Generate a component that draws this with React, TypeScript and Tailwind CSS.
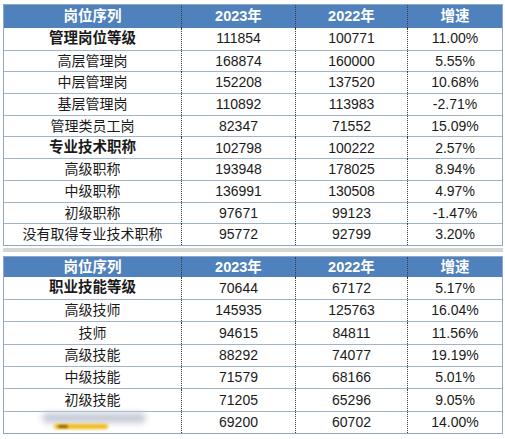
import React from 'react';

type Row = { name: string; y23: string; y22: string; rate: string; bold?: boolean; pic?: boolean };

const topRows: Row[] = [
    { name: '管理岗位等级', y23: '111854', y22: '100771', rate: '11.00%', bold: true },
    { name: '高层管理岗', y23: '168874', y22: '160000', rate: '5.55%' },
    { name: '中层管理岗', y23: '152208', y22: '137520', rate: '10.68%' },
    { name: '基层管理岗', y23: '110892', y22: '113983', rate: '-2.71%' },
    { name: '管理类员工岗', y23: '82347', y22: '71552', rate: '15.09%' },
    { name: '专业技术职称', y23: '102798', y22: '100222', rate: '2.57%', bold: true },
    { name: '高级职称', y23: '193948', y22: '178025', rate: '8.94%' },
    { name: '中级职称', y23: '136991', y22: '130508', rate: '4.97%' },
    { name: '初级职称', y23: '97671', y22: '99123', rate: '-1.47%' },
    { name: '没有取得专业技术职称', y23: '95772', y22: '92799', rate: '3.20%' },
];

const bottomRows: Row[] = [
    { name: '职业技能等级', y23: '70644', y22: '67172', rate: '5.17%', bold: true },
    { name: '高级技师', y23: '145935', y22: '125763', rate: '16.04%' },
    { name: '技师', y23: '94615', y22: '84811', rate: '11.56%' },
    { name: '高级技能', y23: '88292', y22: '74077', rate: '19.19%' },
    { name: '中级技能', y23: '71579', y22: '68166', rate: '5.01%' },
    { name: '初级技能', y23: '71205', y22: '65296', rate: '9.05%' },
    { name: '', y23: '69200', y22: '60702', rate: '14.00%', pic: true },
];

const cols = 'grid grid-cols-[178px_114px_112px_94px]';
const dotted = 'border-r border-dotted border-[#3a3a3a]';

// blurry pencil-ish smudge in the last row
const Smudge = () => (
    <div className="relative w-[110px] h-[20px]">
        <div className="absolute left-[4px] top-[1px] w-[104px] h-[10px] rounded-full bg-[#c4cad6] blur-[3px]" />
        <div className="absolute left-[16px] top-[12px] w-[54px] h-[5px] rounded-full bg-[#f2b918] blur-[1.5px]" />
        <div className="absolute left-[20px] top-[13px] w-[10px] h-[3px] rounded-full bg-[#8a6a10] blur-[1px]" />
    </div>
);

const Table = ({ rows, headH, rowH }: { rows: Row[]; headH: string; rowH: string }) => (
    <div className="border border-[#8fa7c6] bg-white">
        <div className={`${cols} ${headH} bg-[#4f81bd] text-white font-bold text-[14.5px]`}>
            <div className={`flex items-center justify-center ${dotted}`}>岗位序列</div>
            <div className={`flex items-center justify-center ${dotted}`}>2023年</div>
            <div className={`flex items-center justify-center ${dotted}`}>2022年</div>
            <div className="flex items-center justify-center">增速</div>
        </div>
        {rows.map((r, i) => (
            <div
                key={i}
                className={`${cols} ${rowH} text-[14px] text-[#1a1a1a] ${i > 0 ? 'border-t border-[#9fb3cd]' : ''}`}
            >
                <div className={`flex items-center justify-center ${dotted} ${r.bold ? 'font-bold text-[14.5px]' : ''}`}>
                    {r.pic ? <Smudge /> : r.name}
                </div>
                <div className={`flex items-center justify-center ${dotted}`}>{r.y23}</div>
                <div className={`flex items-center justify-center ${dotted}`}>{r.y22}</div>
                <div className="flex items-center justify-center">{r.rate}</div>
            </div>
        ))}
    </div>
);

export default function App() {
    return (
        <div
            className="w-[505px] h-[439px] bg-white pt-[4px] pl-[3px]"
            style={{ fontFamily: '"Liberation Sans", "Noto Sans CJK SC", sans-serif' }}
        >
            <div className="w-[500px]">
                <Table rows={topRows} headH="h-[23px]" rowH="h-[21.7px]" />
                <div className="h-[2px]" />
                <div className="h-[4px] bg-[#d6d6d6]" />
                <div className="h-[4px]" />
                <Table rows={bottomRows} headH="h-[20px]" rowH="h-[22.3px]" />
            </div>
        </div>
    );
}
